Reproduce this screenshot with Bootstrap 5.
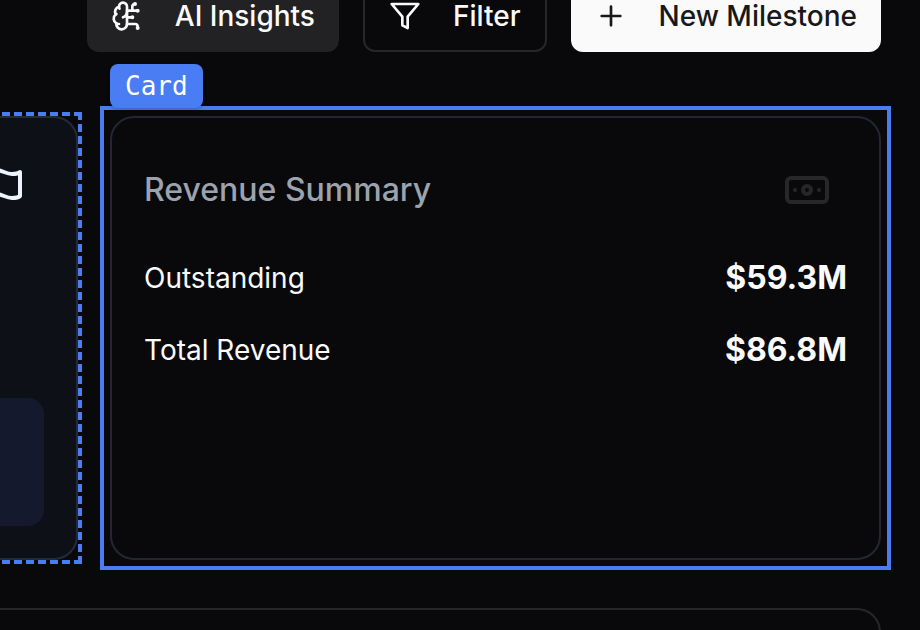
<!DOCTYPE html>
<html lang="en" data-bs-theme="dark">
<head>
<meta charset="utf-8">
<meta name="viewport" content="width=device-width, initial-scale=1">
<title>Milestones</title>
<link href="https://cdn.jsdelivr.net/npm/bootstrap@5.3.0/dist/css/bootstrap.min.css" rel="stylesheet">
<style>
  body { background: #09090b; color: #fafafa; font-family: Inter, "Liberation Sans", sans-serif; font-size: 28px; line-height: 40px; height: 100vh; }
  .page { padding-right: 39px; }
  .toolbar { height: 52px; gap: 24px; }
  .tool-btn { --bs-btn-font-size: 28px; --bs-btn-line-height: 40px; --bs-btn-font-weight: 500; --bs-btn-padding-x: 24px; --bs-btn-padding-y: 0; --bs-btn-border-width: 0; --bs-btn-border-radius: 12px; --bs-btn-color: #fafafa; --bs-btn-hover-color: #fafafa; height: 72px; gap: 32px; white-space: nowrap; }
  .tool-ai { --bs-btn-bg: #222224; --bs-btn-hover-bg: #2c2c2f; }
  .tool-filter { --bs-btn-border-width: 2px; --bs-btn-border-color: #27272a; --bs-btn-hover-border-color: #3f3f46; }
  .tool-new { --bs-btn-bg: #fafafa; --bs-btn-color: #18181b; --bs-btn-hover-bg: #e4e4e7; --bs-btn-hover-color: #18181b; }
  .summary { margin-top: 64px; gap: 32px; }
  .side { flex: 0 0 120px; min-width: 0; margin-left: -42px; outline: 4px dashed #4a7cf3; }
  .side-card { height: 444px; background: #0d1017; border: 2px solid #242a38; border-left: 0; border-radius: 0 24px 24px 0; padding: 48px 32px 32px 0; }
  .side-block { height: 128px; background: #14192d; border-radius: 0 16px 16px 0; }
  .flag { width: 48px; height: 48px; margin-right: 16px; color: #eef2ff; }
  .selected { outline: 4px solid #4a7cf3; outline-offset: 6px; }
  .tag { position: absolute; left: 0; top: -52px; height: 44px; padding: 0 15px; border-radius: 8px; background: #4a7cf3; color: #fff; font: 26px/44px "DejaVu Sans Mono", monospace; box-shadow: 0 2px 4px rgba(0, 0, 0, .2); }
  .revenue { --bs-card-bg: #09090b; --bs-card-border-color: #222732; --bs-card-border-width: 2px; --bs-card-border-radius: 24px; --bs-card-color: #fafafa; height: 444px; padding: 48px 32px 32px; }
  .revenue-title { font-size: 32px; line-height: 48px; font-weight: 500; color: #9ca3af; }
  .cash { color: #27272a; margin-right: 16px; }
  .rows { margin-top: 40px; gap: 24px; }
  .amount { font-size: 32px; line-height: 48px; font-weight: 700; }
  .lower { margin-top: 48px; height: 22px; overflow: hidden; }
  .lower-card { height: 80px; border: 2px solid #27272a; border-left: 0; border-radius: 0 24px 0 0; }
  svg { flex: none; fill: none; stroke: currentColor; stroke-width: 2; stroke-linecap: round; stroke-linejoin: round; }
</style>
<script src="https://cdn.jsdelivr.net/npm/bootstrap@5.3.0/dist/js/bootstrap.bundle.min.js"></script>
</head>
<body class="overflow-hidden">
<main class="page">
  <div class="toolbar d-flex justify-content-end align-items-end">
    <button type="button" class="btn tool-btn tool-ai d-flex align-items-center">
      <svg width="32" height="32" viewBox="0 0 24 24" aria-hidden="true"><path d="M12 5a3 3 0 1 0-5.997.125 4 4 0 0 0-2.526 5.770 4 4 0 0 0 .556 6.588A4 4 0 1 0 12 18Z"/><path d="M9 13a4.500 4.500 0 0 0 3-4M6.003 5.125A3 3 0 0 0 6.401 6.500M3.477 10.896a4 4 0 0 1 .585-.396M6 18a4 4 0 0 1-1.967-.516M12 13h4M12 18h6a2 2 0 0 1 2 2v1M12 8h8M16 8V5a2 2 0 0 1 2-2"/><circle cx="16" cy="13" r=".5"/><circle cx="18" cy="3" r=".5"/><circle cx="20" cy="21" r=".5"/><circle cx="20" cy="8" r=".5"/></svg>
      AI Insights
    </button>
    <button type="button" class="btn tool-btn tool-filter d-flex align-items-center">
      <svg width="32" height="32" viewBox="0 0 24 24" aria-hidden="true"><path d="M22 3H2l8 9.460V19l4 2v-8.540z"/></svg>
      Filter
    </button>
    <button type="button" class="btn tool-btn tool-new d-flex align-items-center">
      <svg width="32" height="32" viewBox="0 0 24 24" aria-hidden="true"><path d="M5 12h14M12 5v14"/></svg>
      New Milestone
    </button>
  </div>

  <div class="summary d-flex">
    <section class="side" aria-label="Milestones">
      <div class="side-card d-flex flex-column justify-content-between">
        <svg class="flag align-self-end" viewBox="0 0 24 24" aria-hidden="true"><path d="M4 15s1-1 4-1 5 2 8 2 4-1 4-1V3s-1 1-4 1-5-2-8-2-4 1-4 1zM4 22v-7"/></svg>
        <div class="side-block"></div>
      </div>
    </section>

    <section class="selected position-relative flex-grow-1">
      <span class="tag">Card</span>
      <div class="card revenue">
        <div class="d-flex justify-content-between align-items-center">
          <h2 class="revenue-title m-0">Revenue Summary</h2>
          <svg class="cash" width="48" height="48" viewBox="0 0 24 24" aria-hidden="true"><rect x="2" y="6" width="20" height="12" rx="2"/><circle cx="12" cy="12" r="2"/><path d="M6 12h.01M18 12h.01"/></svg>
        </div>
        <div class="rows d-flex flex-column">
          <div class="d-flex justify-content-between align-items-center"><span>Outstanding</span><span class="amount">$59.3M</span></div>
          <div class="d-flex justify-content-between align-items-center"><span>Total Revenue</span><span class="amount">$86.8M</span></div>
        </div>
      </div>
    </section>
  </div>

  <div class="lower"><div class="lower-card"></div></div>
</main>
</body>
</html>
